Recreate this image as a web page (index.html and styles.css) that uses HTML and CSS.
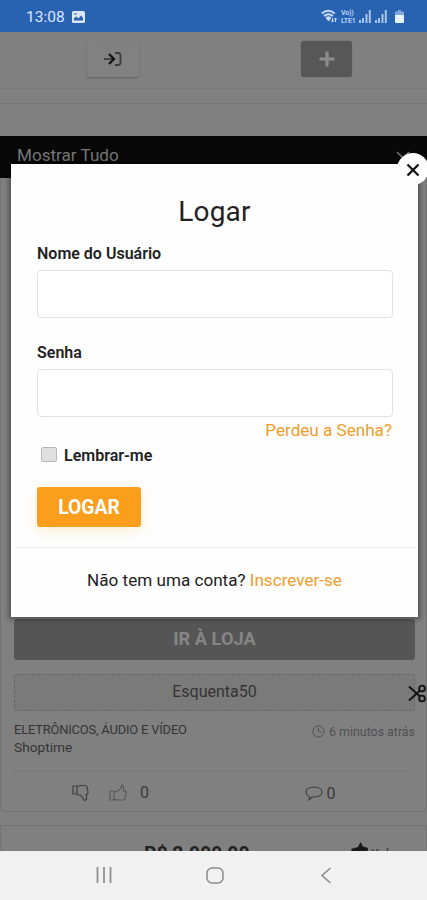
FILE: index.html
```html
<!DOCTYPE html>
<html lang="pt-BR">
<head>
<meta charset="utf-8">
<meta name="viewport" content="width=device-width, initial-scale=1">
<title>Logar</title>
<link rel="stylesheet" href="styles.css">
</head>
<body>
<div class="phone">
  <header class="status">
    <span class="clock">13:08</span>
    <svg class="status-pic" width="13" height="12" viewBox="0 0 13 12"><rect width="13" height="12" rx="1.5" fill="#d9e6fa"/><path d="M2 9.500V7l2.500-1.500L6.500 7.500 9 4.500l2 2.500v2.500z" fill="#2a62b2"/><path d="M2 3h3" stroke="#2a62b2"/></svg>
    <div class="status-right">
      <svg width="17" height="15" viewBox="0 0 17 15" fill="none" stroke="#c8dcf8"><path d="M.8 4.500q6.500-5.500 13 0M3 7q4.500-3.500 9 0" stroke-width="2"/><path d="M5 8.500q2.500-1.500 5 0L7.500 12z" fill="#c8dcf8"/><path d="M11.500 9v4M10 11.500l1.500 1.500 1.500-1.500M14.500 13V9M13 10.500 14.500 9l1.500 1.500" stroke-width="1"/></svg>
      <span class="volte"><span>Vo))</span><span>LTE1</span></span>
      <svg width="12" height="13" viewBox="0 0 12 13" fill="#a9c6ef"><path d="M0 10h2v3H0zM3 8h2v5H3zM6.500 4h2v9h-2zM9.800 0h2v13h-2z"/></svg>
      <svg class="signal2" width="12" height="13" viewBox="0 0 12 13" fill="#a9c6ef"><path d="M0 10h2v3H0zM3 8h2v5H3zM6.500 4h2v9h-2zM9.800 0h2v13h-2z"/></svg>
      <svg class="battery" width="9" height="13" viewBox="0 0 9 13"><path d="M3 0h3v1.500h2q1 0 1 1V5H0V2.500q0-1 1-1h2z" fill="#80a8e0"/><path d="M0 5h9v7q0 1-1 1H1q-1 0-1-1z" fill="#e8f2ff"/></svg>
    </div>
  </header>

  <main class="page">
    <div class="toolbar">
      <div class="tool-cell"><button class="tool login-tool" aria-label="Entrar"><svg width="20" height="16" viewBox="0 0 20 16" fill="none"><path d="M1 8h9" stroke="#444" stroke-width="2"/><path d="M6 3l5 5-5 5" stroke="#111" stroke-width="2.200"/><path d="M12 2h3q2.500 0 2.500 2.500v7q0 2.500-2.500 2.500h-3" stroke="#3c3c3c" stroke-width="1.800"/></svg></button></div>
      <div class="tool-cell"><button class="tool add-tool" aria-label="Adicionar"><svg width="16" height="16" viewBox="0 0 16 16"><path d="M8 .5v15M.5 8h15" stroke="#8d8d8d" stroke-width="3.200"/></svg></button></div>
    </div>
    <div class="strip"></div>
    <div class="filter"><span>Mostrar Tudo</span><svg width="14" height="8" viewBox="0 0 14 8" fill="none" stroke="#777" stroke-width="1.500"><path d="M1 1l6 6 6-6"/></svg></div>
    <article class="card">
      <div class="store-btn">IR À LOJA</div>
      <div class="coupon"><span>Esquenta50</span>
        <svg class="scissors" width="18" height="19" viewBox="0 0 18 19" fill="none" stroke="#141414"><path d="M1 2.500l11 10M1 16.500l11-10" stroke-width="2"/><circle cx="14" cy="4.500" r="2.900" stroke-width="1.900"/><circle cx="14" cy="14.500" r="2.900" stroke-width="1.900"/></svg>
      </div>
      <div class="meta">
        <div><div class="category">ELETRÔNICOS, ÁUDIO E VÍDEO</div><div class="shop">Shoptime</div></div>
        <div class="time"><svg width="13" height="13" viewBox="0 0 13 13" fill="none" stroke="#505050"><circle cx="6.500" cy="6.500" r="5.600"/><path d="M6.500 3v3.500l3 1"/></svg><span>6 minutos atrás</span></div>
      </div>
      <div class="actions">
        <div class="votes">
          <svg width="18" height="18" viewBox="0 0 18 18" fill="none" stroke="#3e3e3e" stroke-width="1.200"><path d="M1 2h4v8H1zM5 2.500l3-1h5q1.500 0 2 1.500l1 5q.3 2.500-2 2.500l.5 1v4l-2 1-4-5.500H5"/></svg>
          <svg width="18" height="18" viewBox="0 0 18 18" fill="none" stroke="#585858" stroke-width="1.100"><path d="M1 7h4v9H1zM5 8l4-1 3-3 1-3 1.500 1v5H17l-.5 7q-.5 2-2.500 2H8l-3-1"/></svg>
          <span>0</span>
        </div>
        <div class="comments"><svg width="18" height="15" viewBox="0 0 18 15" fill="none" stroke="#454545" stroke-width="1.200"><path d="M4.500 10.500Q1 9 1 6q0-4.500 8-5 8 .5 8 5t-8 5l-2 .2L4 13.800z"/></svg><span>0</span></div>
      </div>
    </article>
    <article class="next-card">
      <div class="price">R$ 2.999,00</div>
      <div class="rank"><svg width="20" height="16" viewBox="0 0 20 16"><path d="M10.500 0l2.500 4.500 5 1.500-1 8H4L1 7l7-2z" fill="#181818"/></svg><span>Kabum</span></div>
    </article>
  </main>

  <nav class="navbar">
    <div><svg width="18" height="16" viewBox="0 0 18 16" stroke="#8b8b8b" stroke-width="1.700"><path d="M2.500 0v16M9 0v16M15.500 0v16"/></svg></div>
    <div><svg width="18" height="17" viewBox="0 0 18 17" fill="none" stroke="#8b8b8b" stroke-width="1.500"><rect x="1" y="1" width="16" height="15" rx="5"/></svg></div>
    <div><svg width="12" height="17" viewBox="0 0 12 17" fill="none" stroke="#8b8b8b" stroke-width="1.500"><path d="M10.500 1 2 8.500l8.500 7.500"/></svg></div>
  </nav>

  <section class="modal">
    <button class="close" aria-label="Fechar"><svg width="14" height="14" viewBox="0 0 14 14"><path d="M1.500 1.500l11 11M12.500 1.500l-11 11" stroke="#111" stroke-width="2.300"/></svg></button>
    <form class="form">
      <h1>Logar</h1>
      <label class="user-label" for="user">Nome do Usuário</label>
      <input class="field" id="user" type="text">
      <label class="pass-label" for="pass">Senha</label>
      <input class="field" id="pass" type="password">
      <a class="lost">Perdeu a Senha?</a>
      <div class="remember"><input class="check" id="rem" type="checkbox"><label for="rem">Lembrar-me</label></div>
      <button class="submit" type="button">LOGAR</button>
    </form>
    <div class="signup"><span>Não tem uma conta? <a>Inscrever-se</a></span></div>
  </section>
</div>
</body>
</html>
```
FILE: styles.css
```css
* { box-sizing: border-box; }
body { margin: 0; font-family: Roboto, "Liberation Sans", sans-serif; font-size: 16px; color: #222; }
svg { display: block; flex: none; }
button { border: 0; padding: 0; font-family: inherit; }
.phone { position: relative; width: 427px; height: 900px; overflow: hidden; display: flex; flex-direction: column; background: #808080; }

.status { height: 32px; flex: none; background: #2a62b2; display: flex; align-items: center; padding: 2px 23px 0 26px; color: #dce8fb; }
.clock { font-size: 15.500px; line-height: 20px; width: 46px; }
.status-right { margin-left: auto; display: flex; align-items: center; gap: 3px; padding-bottom: 1px; }
.volte { display: flex; flex-direction: column; width: 15px; font-size: 7px; line-height: 8px; font-weight: 700; color: #b5cff3; white-space: nowrap; letter-spacing: -.2px; }
.signal2 { margin-left: 1px; }
.battery { margin-left: 5px; }

.page { flex: none; height: 819px; overflow: hidden; display: flex; flex-direction: column; }
.toolbar { height: 57px; flex: none; display: grid; grid-template-columns: 1fr 1fr; padding: 9px 0 0 11px; border-bottom: 1px solid #797979; }
.tool-cell { display: flex; justify-content: center; }
.tool-cell:first-child { padding-right: 5px; }
.tool { height: 36px; display: flex; align-items: center; justify-content: center; border-radius: 3px; }
.login-tool { width: 52px; background: #818181; box-shadow: 0 1px 2px #606060; }
.add-tool { width: 51px; background: #575757; box-shadow: 0 0 1px #575757; margin-left: 7px; }
.strip { height: 47px; flex: none; padding-top: 14px; }
.strip::before { content: ""; display: block; height: 1px; background: #747474; }
.filter { height: 42px; flex: none; background: #080808; color: #777; font-size: 17.100px; line-height: 20px; display: flex; justify-content: space-between; padding: 9px 17px 0 17px; }
.filter svg { margin-top: 6px; }
.card { height: 634px; flex: none; border: 1px solid #737373; border-top: 0; border-radius: 0 0 4px 4px; padding: 441px 11px 0 13px; }
.store-btn { height: 41px; border-radius: 3px; background: #555; color: #858585; font-size: 18.300px; font-weight: 700; line-height: 40px; text-align: center; }
.coupon { position: relative; margin-top: 14px; height: 37px; border: 1px dashed #656565; border-radius: 3px; background: #7a7a7a; text-align: center; line-height: 34px; font-size: 16px; color: #343434; }
.scissors { position: absolute; right: -12px; top: 9px; }
.meta { margin-top: 10px; height: 49px; display: flex; justify-content: space-between; color: #343434; }
.category { font-size: 12.900px; line-height: 18px; letter-spacing: -.17px; white-space: nowrap; }
.shop { font-size: 13.700px; line-height: 17px; }
.time { display: flex; height: 19px; align-items: center; gap: 4px; font-size: 12.400px; color: #505050; margin-top: 1px; }
.actions { border-top: 1px solid #7a7a7a; height: 41px; display: grid; grid-template-columns: 1fr 1fr; color: #393939; font-size: 16px; line-height: 20px; }
.votes { display: flex; align-items: center; padding: 3px 0 0 58px; gap: 19px; }
.votes span { margin-left: -6px; }
.comments { display: flex; align-items: center; gap: 4px; padding: 5px 0 0 90px; }
.next-card { margin-top: 13px; height: 90px; flex: none; border: 1px solid #747474; display: flex; justify-content: space-between; padding: 18px 14px 0 143px; }
.price { font-size: 19.400px; line-height: 22px; font-weight: 700; }
.rank { display: flex; align-items: flex-start; font-size: 13px; line-height: 18px; color: #343434; gap: 1px; margin-top: -2px; }
.rank span { margin-top: 3px; }

.navbar { height: 49px; flex: none; background: #f1f1f1; display: grid; grid-template-columns: 111px 111px 112px; justify-content: center; padding-left: 3px; padding-bottom: 1px; }
.navbar div { display: flex; align-items: center; justify-content: center; }

.modal { position: absolute; left: 11px; top: 164px; width: 407px; height: 453px; background: #fefefe; box-shadow: 0 0 5px 2px rgba(0,0,0,.4); display: flex; flex-direction: column; }
.close { position: absolute; right: -11px; top: -11px; width: 32px; height: 32px; border-radius: 50%; background: #fff; display: flex; align-items: center; justify-content: center; }
.close svg { margin: 2px 1px 0 0; }
.form { height: 384px; padding: 30px 24px 0 21px; display: flex; flex-direction: column; border-bottom: 1px solid #eee; margin: 0 2px 0 5px; }
h1 { margin: 0; font-size: 28px; line-height: 36px; font-weight: 400; text-align: center; letter-spacing: .2px; }
label { font-weight: 600; font-size: 16px; line-height: 20px; }
.user-label { margin-top: 14px; }
.field { width: 356px; height: 48px; margin: 6px 0 0; flex: none; background: #fff; border: 1px solid #e2e2e2; border-radius: 4px; outline: 0; }
.pass-label { margin-top: 25px; }
.lost { align-self: flex-end; margin: 3px 0 0; font-size: 17.100px; line-height: 20px; color: #f29c29; }
a { color: #f29c29; }
.remember { display: flex; align-items: center; height: 20px; margin-top: 6px; padding-left: 4px; gap: 7px; }
.check { appearance: none; width: 16px; height: 15px; margin: -3px 0 0; border: 1px solid #b8b8b8; border-radius: 2px; background: #e0e0e0; }
.submit { margin-top: 21px; width: 104px; height: 40px; flex: none; border-radius: 3px; background: #fa9e1b; color: #fff; font-size: 19.300px; font-weight: 700; box-shadow: 0 4px 14px rgba(250,158,27,.18); }
.signup { flex: 1; display: flex; justify-content: center; font-size: 17.100px; line-height: 20px; padding-top: 22px; }
```
